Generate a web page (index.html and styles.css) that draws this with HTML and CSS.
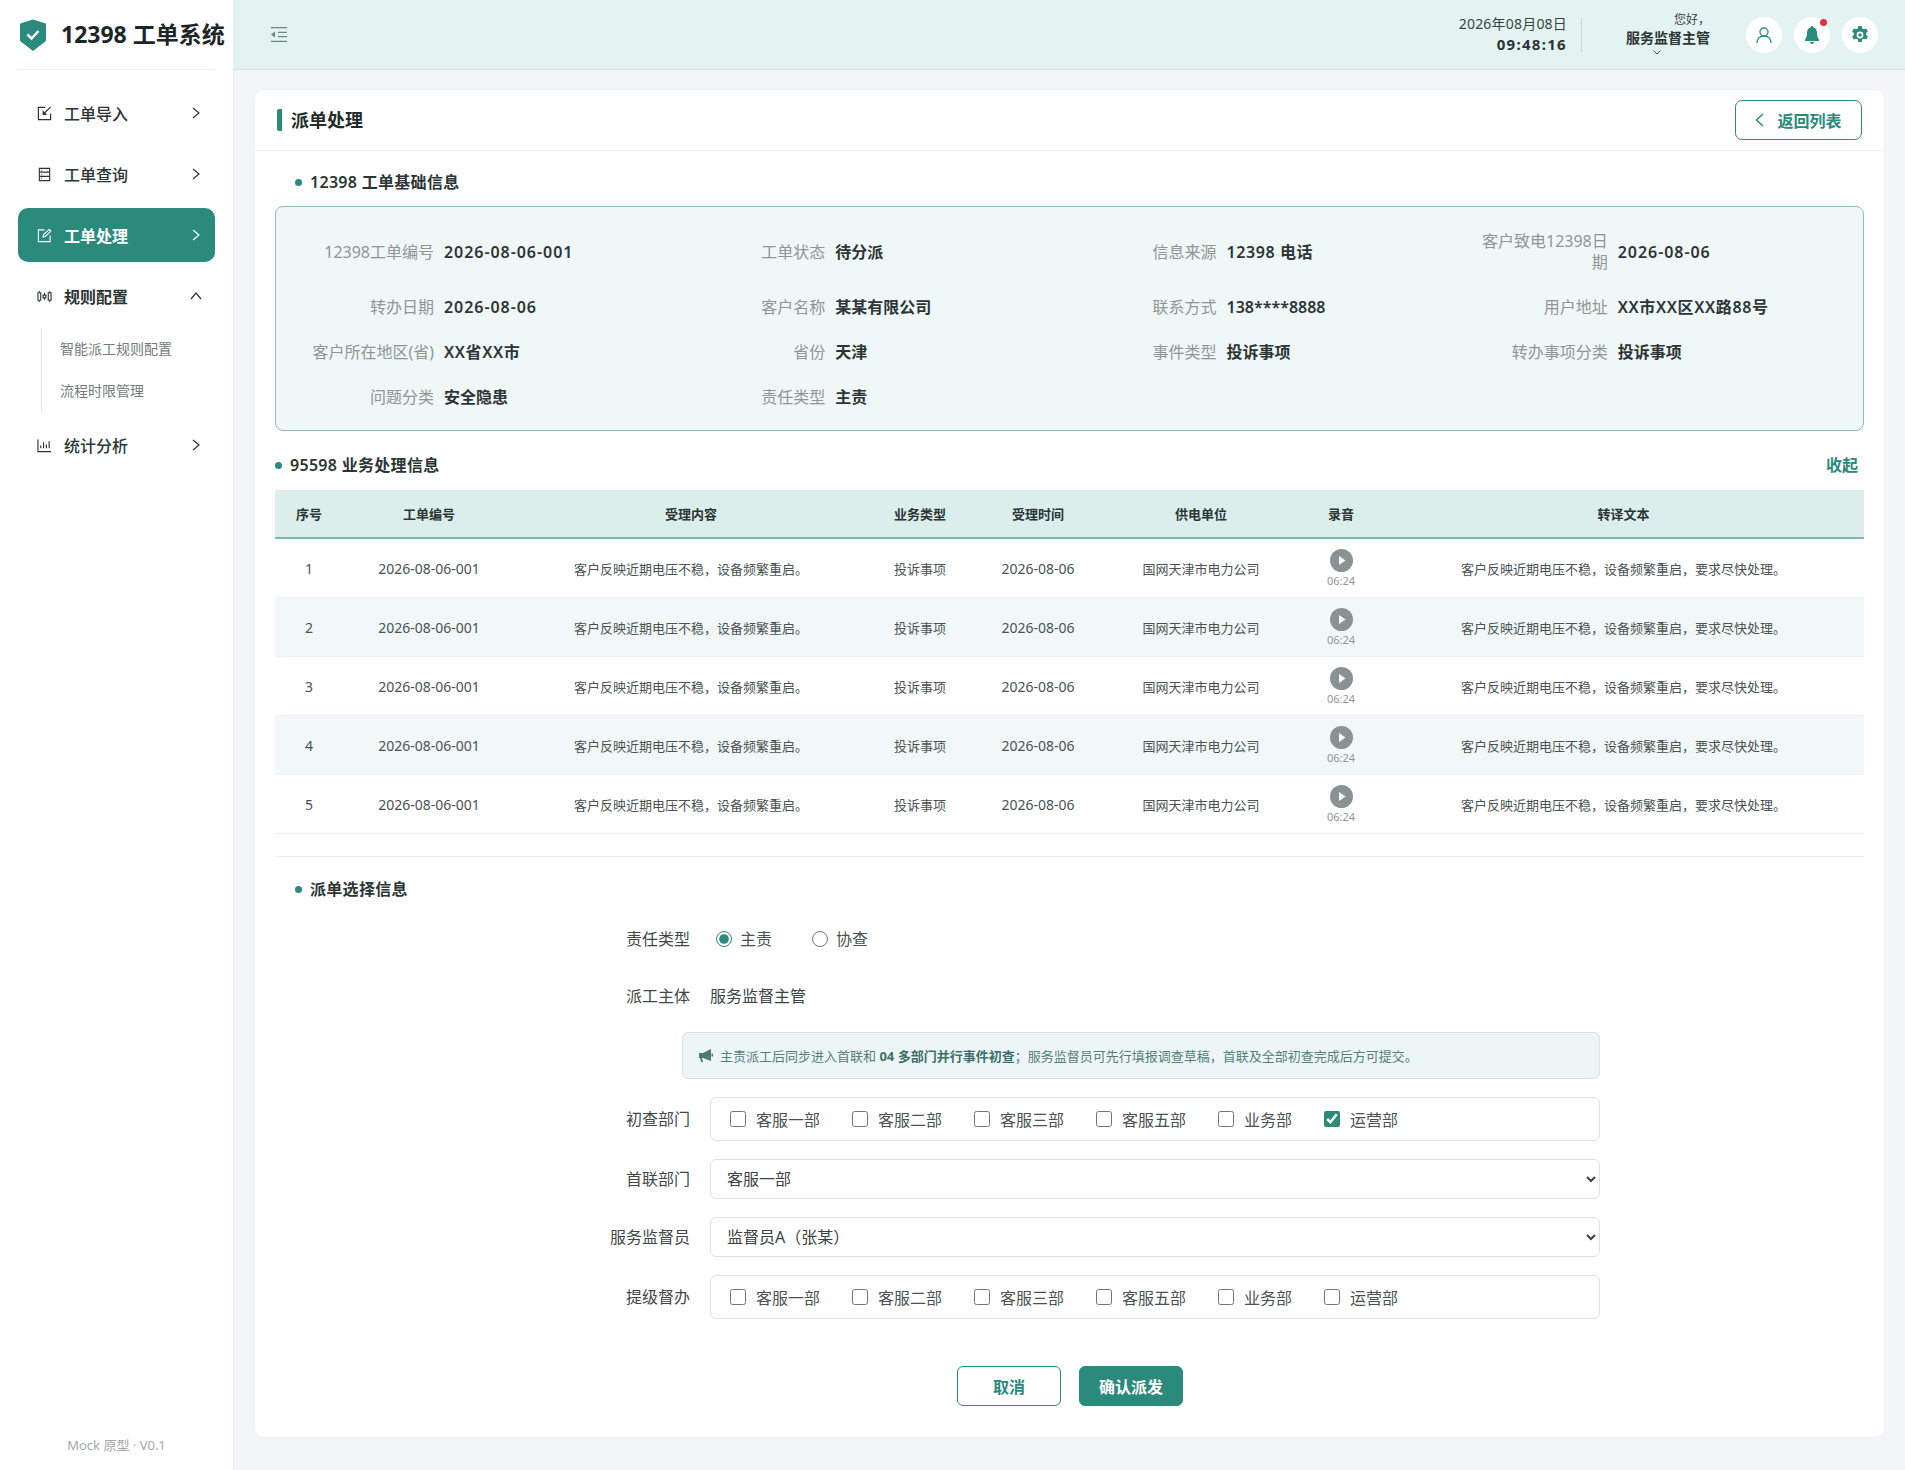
FILE: index.html
```html
<!DOCTYPE html>
<html lang="zh-CN">
<head>
    <meta charset="UTF-8">
    <title>12398 工单系统</title>
    <link rel="stylesheet" href="styles.css">
</head>
<body>
    <aside class="sidebar">
        <div class="logo">
            <svg class="logo-icon" viewBox="0 0 26 32"><path d="M13 .5 25 4.300c.6.200 1 .7 1 1.300V21c0 .6-.3 1.100-.7 1.500L13 32 .7 22.500C.3 22.100 0 21.600 0 21V5.600c0-.6.4-1.100 1-1.300z" fill="#2a8a7c"/><path d="M7.500 15.500l4 4 7-7.500" fill="none" stroke="#fff" stroke-width="2.500"/></svg>
            <span class="logo-text">12398 工单系统</span>
        </div>
        <nav class="nav">
            <a class="nav-item">
                <svg class="nav-icon" viewBox="0 0 16 16"><path d="M9 1.500H1.500v13h13V8" fill="none" stroke="currentColor" stroke-width="1.300"/><path d="M14.500 1 7.500 8" fill="none" stroke="currentColor" stroke-width="1.300"/><path d="M6 4.500v5h5z" fill="currentColor"/></svg>
                <span>工单导入</span>
                <svg class="nav-arrow" viewBox="0 0 8 12"><path d="M1 1l6 5-6 5" fill="none" stroke="currentColor" stroke-width="1.200"/></svg>
            </a>
            <a class="nav-item">
                <svg class="nav-icon" viewBox="0 0 16 16"><path d="M2.500 1.500h11v13h-11zM2.500 5.500h11M2.500 10h11M4.500 3.500h1M4.500 8h1M4.500 12h1" fill="none" stroke="currentColor" stroke-width="1.200"/></svg>
                <span>工单查询</span>
                <svg class="nav-arrow" viewBox="0 0 8 12"><path d="M1 1l6 5-6 5" fill="none" stroke="currentColor" stroke-width="1.200"/></svg>
            </a>
            <a class="nav-item active">
                <svg class="nav-icon" viewBox="0 0 16 16"><path d="M8 2H1.500v12.500H14V8M6.500 9.500l.5-2.500 6-5.500 1.800 1.800-6 5.700z" fill="none" stroke="currentColor" stroke-width="1.200"/></svg>
                <span>工单处理</span>
                <svg class="nav-arrow" viewBox="0 0 8 12"><path d="M1 1l6 5-6 5" fill="none" stroke="currentColor" stroke-width="1.200"/></svg>
            </a>
            <a class="nav-item open">
                <svg class="nav-icon" viewBox="0 0 16 16"><path d="M2.500 2v12M8 4v8M13.500 2v12" stroke="currentColor" stroke-width="1"/><path d="M1 4h3v8H1zM6.500 6.500h3v3h-3zM12 4h3v8h-3z" fill="#fff" stroke="currentColor" stroke-width="1.200"/></svg>
                <span>规则配置</span>
                <svg class="nav-arrow up" viewBox="0 0 12 8"><path d="M1 7l5-6 5 6" fill="none" stroke="currentColor" stroke-width="1.200"/></svg>
            </a>
            <div class="subnav">
                <a class="subnav-item">智能派工规则配置</a>
                <a class="subnav-item">流程时限管理</a>
            </div>
            <a class="nav-item">
                <svg class="nav-icon" viewBox="0 0 16 16"><path d="M1 1.500v13h14M4 11V8M7 11V4.500M10 11V7M13 11V3.500" fill="none" stroke="currentColor" stroke-width="1.200"/></svg>
                <span>统计分析</span>
                <svg class="nav-arrow" viewBox="0 0 8 12"><path d="M1 1l6 5-6 5" fill="none" stroke="currentColor" stroke-width="1.200"/></svg>
            </a>
        </nav>
        <div class="sidebar-footer">Mock 原型 · V0.1</div>
    </aside>

    <div class="main">
        <header class="topbar">
            <svg class="menu-toggle" viewBox="0 0 16 15"><path d="M0 .7h16M7 5.300h9M7 9.700h9M0 14.300h16" stroke="#6f8583" stroke-width="1.300"/><path d="M4 4.500v6L0 7.500z" fill="#6f8583"/></svg>
            <div class="datetime">
                <div class="date">2026年08月08日</div>
                <div class="time">09:48:16</div>
            </div>
            <div class="user">
                <div class="hello">您好，</div>
                <div class="user-name">服务监督主管</div>
                <svg class="user-arrow" viewBox="0 0 8 5"><path d="M.5.500 4 4 7.500.500" fill="none" stroke="#333" stroke-width=".9"/></svg>
            </div>
            <div class="top-icons">
                <span class="round-btn"><svg viewBox="0 0 16 16" width="16" height="16"><circle cx="8" cy="5" r="4" fill="none" stroke="#2a8a7c" stroke-width="1.300"/><path d="M1 16c0-4 2.500-7 7-7s7 3 7 7" fill="none" stroke="#2a8a7c" stroke-width="1.300"/></svg></span>
                <span class="round-btn"><svg viewBox="0 0 14 18" width="14" height="18"><path d="M7 0c.8 0 1.300.5 1.300 1.300C10.800 2 12 4 12 7c0 3 .7 5 2 6.500V15H0v-1.500C1.300 12 2 10 2 7c0-3 1.200-5 3.700-5.700C5.700.5 6.200 0 7 0zM5 16h4c0 1.200-.9 2-2 2s-2-.8-2-2z" fill="#2a8a7c"/></svg><i class="dot-red"></i></span>
                <span class="round-btn"><svg viewBox="0 0 18 18" width="18" height="18"><path d="M7.300 0h3.400l.5 2.400 1.700.9 2.300-.8 1.700 2.900-1.800 1.600v2l1.800 1.600-1.700 2.900-2.300-.8-1.700.9-.5 2.400H7.300l-.5-2.400-1.700-.9-2.300.8-1.700-2.900 1.800-1.600v-2L1.100 5.400l1.700-2.900 2.300.8 1.700-.9z" fill="#2a8a7c"/><circle cx="9" cy="9" r="3.400" fill="#fff"/><circle cx="9" cy="9" r="1.700" fill="#2a8a7c"/></svg></span>
            </div>
        </header>

        <div class="content">
            <section class="card">
                <div class="card-header">
                    <h2 class="card-title">派单处理</h2>
                    <button class="btn-back"><svg viewBox="0 0 9 14" width="9" height="14"><path d="M8 1 1.500 7 8 13" fill="none" stroke="#2a8a7c" stroke-width="1.500"/></svg>返回列表</button>
                </div>
                <div class="card-body">
                    <h3 class="section-title indent first">12398 工单基础信息</h3>
                    <div class="info-box">
                        <div class="info-item"><span class="info-label">12398工单编号</span><span class="info-value code">2026-08-06-001</span></div>
                        <div class="info-item"><span class="info-label">工单状态</span><span class="info-value">待分派</span></div>
                        <div class="info-item"><span class="info-label">信息来源</span><span class="info-value wide">12398 电话</span></div>
                        <div class="info-item"><span class="info-label">客户致电12398日期</span><span class="info-value code">2026-08-06</span></div>
                        <div class="info-item"><span class="info-label">转办日期</span><span class="info-value code">2026-08-06</span></div>
                        <div class="info-item"><span class="info-label">客户名称</span><span class="info-value">某某有限公司</span></div>
                        <div class="info-item"><span class="info-label">联系方式</span><span class="info-value">138****8888</span></div>
                        <div class="info-item"><span class="info-label">用户地址</span><span class="info-value wide">XX市XX区XX路88号</span></div>
                        <div class="info-item"><span class="info-label">客户所在地区(省)</span><span class="info-value wide">XX省XX市</span></div>
                        <div class="info-item"><span class="info-label">省份</span><span class="info-value">天津</span></div>
                        <div class="info-item"><span class="info-label">事件类型</span><span class="info-value">投诉事项</span></div>
                        <div class="info-item"><span class="info-label">转办事项分类</span><span class="info-value">投诉事项</span></div>
                        <div class="info-item"><span class="info-label">问题分类</span><span class="info-value">安全隐患</span></div>
                        <div class="info-item"><span class="info-label">责任类型</span><span class="info-value">主责</span></div>
                    </div>

                    <div class="section-row">
                        <h3 class="section-title">95598 业务处理信息</h3>
                        <a class="link-collapse">收起</a>
                    </div>
                    <table class="data-table">
                        <colgroup>
                            <col class="c-no"><col class="c-code"><col class="c-content"><col class="c-type"><col class="c-date"><col class="c-unit"><col class="c-audio"><col>
                        </colgroup>
                        <thead>
                            <tr><th>序号</th><th>工单编号</th><th>受理内容</th><th>业务类型</th><th>受理时间</th><th>供电单位</th><th>录音</th><th>转译文本</th></tr>
                        </thead>
                        <tbody>
                            <tr>
                                <td class="num">1</td><td class="num">2026-08-06-001</td><td>客户反映近期电压不稳，设备频繁重启。</td><td>投诉事项</td><td class="num">2026-08-06</td><td>国网天津市电力公司</td>
                                <td><svg class="play" viewBox="0 0 23 23"><circle cx="11.500" cy="11.500" r="11.500" fill="#8a9393"/><path d="M9 7l6.500 4.500L9 16z" fill="#fff"/></svg><div class="audio-time">06:24</div></td>
                                <td>客户反映近期电压不稳，设备频繁重启，要求尽快处理。</td>
                            </tr>
                            <tr>
                                <td class="num">2</td><td class="num">2026-08-06-001</td><td>客户反映近期电压不稳，设备频繁重启。</td><td>投诉事项</td><td class="num">2026-08-06</td><td>国网天津市电力公司</td>
                                <td><svg class="play" viewBox="0 0 23 23"><circle cx="11.500" cy="11.500" r="11.500" fill="#8a9393"/><path d="M9 7l6.500 4.500L9 16z" fill="#fff"/></svg><div class="audio-time">06:24</div></td>
                                <td>客户反映近期电压不稳，设备频繁重启，要求尽快处理。</td>
                            </tr>
                            <tr>
                                <td class="num">3</td><td class="num">2026-08-06-001</td><td>客户反映近期电压不稳，设备频繁重启。</td><td>投诉事项</td><td class="num">2026-08-06</td><td>国网天津市电力公司</td>
                                <td><svg class="play" viewBox="0 0 23 23"><circle cx="11.500" cy="11.500" r="11.500" fill="#8a9393"/><path d="M9 7l6.500 4.500L9 16z" fill="#fff"/></svg><div class="audio-time">06:24</div></td>
                                <td>客户反映近期电压不稳，设备频繁重启，要求尽快处理。</td>
                            </tr>
                            <tr>
                                <td class="num">4</td><td class="num">2026-08-06-001</td><td>客户反映近期电压不稳，设备频繁重启。</td><td>投诉事项</td><td class="num">2026-08-06</td><td>国网天津市电力公司</td>
                                <td><svg class="play" viewBox="0 0 23 23"><circle cx="11.500" cy="11.500" r="11.500" fill="#8a9393"/><path d="M9 7l6.500 4.500L9 16z" fill="#fff"/></svg><div class="audio-time">06:24</div></td>
                                <td>客户反映近期电压不稳，设备频繁重启，要求尽快处理。</td>
                            </tr>
                            <tr>
                                <td class="num">5</td><td class="num">2026-08-06-001</td><td>客户反映近期电压不稳，设备频繁重启。</td><td>投诉事项</td><td class="num">2026-08-06</td><td>国网天津市电力公司</td>
                                <td><svg class="play" viewBox="0 0 23 23"><circle cx="11.500" cy="11.500" r="11.500" fill="#8a9393"/><path d="M9 7l6.500 4.500L9 16z" fill="#fff"/></svg><div class="audio-time">06:24</div></td>
                                <td>客户反映近期电压不稳，设备频繁重启，要求尽快处理。</td>
                            </tr>
                        </tbody>
                    </table>

                    <div class="divider"></div>

                    <h3 class="section-title indent">派单选择信息</h3>
                    <form class="dispatch-form">
                        <div class="form-row row-radio">
                            <label class="form-label">责任类型</label>
                            <div class="radio-group">
                                <label class="radio"><input type="radio" name="duty" checked>主责</label>
                                <label class="radio"><input type="radio" name="duty">协查</label>
                            </div>
                        </div>
                        <div class="form-row row-text">
                            <label class="form-label">派工主体</label>
                            <div class="form-text">服务监督主管</div>
                        </div>
                        <div class="notice">
                            <svg class="notice-icon" viewBox="0 0 14 13"><path d="M0 4h4l8-4v12L4 9H3l1 4H2L1 9H0z" fill="#4f7a73"/><rect x="12.500" y="4.500" width="1.500" height="3" fill="#4f7a73"/></svg>
                            <span>主责派工后同步进入首联和 <b>04 多部门并行事件初查</b>；服务监督员可先行填报调查草稿，首联及全部初查完成后方可提交。</span>
                        </div>
                        <div class="form-row">
                            <label class="form-label">初查部门</label>
                            <div class="check-box">
                                <label class="check"><input type="checkbox">客服一部</label>
                                <label class="check"><input type="checkbox">客服二部</label>
                                <label class="check"><input type="checkbox">客服三部</label>
                                <label class="check"><input type="checkbox">客服五部</label>
                                <label class="check"><input type="checkbox">业务部</label>
                                <label class="check"><input type="checkbox" checked>运营部</label>
                            </div>
                        </div>
                        <div class="form-row">
                            <label class="form-label">首联部门</label>
                            <select class="form-select"><option>客服一部</option></select>
                        </div>
                        <div class="form-row">
                            <label class="form-label">服务监督员</label>
                            <select class="form-select"><option>监督员A（张某）</option></select>
                        </div>
                        <div class="form-row">
                            <label class="form-label">提级督办</label>
                            <div class="check-box">
                                <label class="check"><input type="checkbox">客服一部</label>
                                <label class="check"><input type="checkbox">客服二部</label>
                                <label class="check"><input type="checkbox">客服三部</label>
                                <label class="check"><input type="checkbox">客服五部</label>
                                <label class="check"><input type="checkbox">业务部</label>
                                <label class="check"><input type="checkbox">运营部</label>
                            </div>
                        </div>
                    </form>
                    <div class="form-actions">
                        <button class="btn btn-cancel">取消</button>
                        <button class="btn btn-primary">确认派发</button>
                    </div>
                </div>
            </section>
        </div>
    </div>
</body>
</html>
```

FILE: styles.css
```css
* {
    box-sizing: border-box;
    font-family: "Noto Sans", "Noto Sans CJK SC", sans-serif;
}

body {
    margin: 0;
    display: flex;
    min-height: 100vh;
    background: #f3f6f8;
    color: #2c3535;
}

/* 侧边栏 */
.sidebar {
    width: 234px;
    flex-shrink: 0;
    display: flex;
    flex-direction: column;
    background: #fff;
    border-right: 1px solid #e6ecec;
}

.logo {
    height: 70px;
    margin: 0 18px;
    padding-left: 2px;
    display: flex;
    align-items: center;
    gap: 15px;
    border-bottom: 1px solid #eef2f2;
}

.logo-icon {
    width: 26px;
    height: 32px;
    flex-shrink: 0;
}

.logo-text {
    margin-bottom: 3px;
    font-size: 23px;
    font-weight: 700;
    white-space: nowrap;
    color: #1d2626;
}

.nav {
    margin: 16px 18px 0;
}

.nav-item {
    height: 54px;
    margin-bottom: 7px;
    padding: 0 15px 0 19px;
    display: flex;
    align-items: center;
    gap: 12px;
    border-radius: 10px;
    font-size: 16px;
    font-weight: 500;
    color: #2c3535;
}

.nav-item.open {
    margin-bottom: 5px;
    font-weight: 700;
}

.nav-item.active {
    background: #2a8a7c;
    color: #fff;
    font-weight: 700;
}

.nav-icon {
    width: 15px;
    height: 15px;
    flex-shrink: 0;
}

.nav-arrow {
    width: 8px;
    height: 12px;
    margin-left: auto;
}

.nav-arrow.up {
    width: 12px;
    height: 8px;
    margin-right: -2px;
}

.subnav {
    margin: 0 0 6px 23px;
    border-left: 1px solid #e3e8e8;
}

.subnav-item {
    display: block;
    height: 42px;
    line-height: 42px;
    padding-left: 18px;
    font-size: 14px;
    color: #757c7c;
}

.sidebar-footer {
    margin-top: auto;
    padding-bottom: 17px;
    text-align: center;
    font-size: 13px;
    color: #a3a9a9;
}

/* 顶栏 */
.main {
    flex: 1;
    min-width: 0;
    display: flex;
    flex-direction: column;
}

.topbar {
    height: 70px;
    padding: 0 27px 0 37px;
    display: flex;
    align-items: center;
    background: #e3f3f1;
    border-bottom: 1px solid #d9e5e5;
}

.menu-toggle {
    width: 16px;
    height: 15px;
}

.datetime {
    margin-left: auto;
    padding-right: 14px;
    text-align: right;
}

.date {
    font-size: 14px;
    line-height: 20px;
    letter-spacing: .2px;
    color: #3a4343;
}

.time {
    font-size: 15px;
    line-height: 21px;
    font-weight: 700;
    letter-spacing: 1.3px;
    color: #2c3535;
}

.user {
    margin-right: 36px;
    padding-left: 44px;
    height: 34px;
    border-left: 1px solid #c9d8d8;
    position: relative;
    text-align: right;
}

.hello {
    margin-top: -7px;
    font-size: 12px;
    line-height: 17px;
    color: #3a4343;
}

.user-name {
    font-size: 14px;
    line-height: 20px;
    font-weight: 700;
    color: #2c3535;
}

.user-arrow {
    position: absolute;
    left: 71px;
    top: 32px;
    width: 8px;
    height: 5px;
}

.top-icons {
    display: flex;
    gap: 12px;
}

.round-btn {
    position: relative;
    width: 36px;
    height: 36px;
    display: flex;
    align-items: center;
    justify-content: center;
    border-radius: 50%;
    background: #fff;
}

.dot-red {
    position: absolute;
    top: 2px;
    right: 3px;
    width: 7px;
    height: 7px;
    border-radius: 50%;
    background: #e0323c;
}

/* 内容卡片 */
.content {
    padding: 19px 20px 33px 20px;
}

.card {
    background: #fff;
    border-radius: 10px;
    border: 1px solid #eef2f2;
}

.card-header {
    height: 61px;
    padding: 0 22px;
    display: flex;
    align-items: center;
    justify-content: space-between;
    border-bottom: 1px solid #edf1f1;
}

.card-title {
    margin: 0;
    padding-left: 9px;
    border-left: 5px solid #2a8a7c;
    border-radius: 2px;
    font-size: 18px;
    line-height: 22px;
    font-weight: 700;
    color: #1f2a2a;
}

.btn-back {
    width: 127px;
    height: 40px;
    display: flex;
    align-items: center;
    justify-content: center;
    gap: 13px;
    background: #fff;
    border: 1px solid #2a8a7c;
    border-radius: 7px;
    font-size: 16px;
    font-weight: 600;
    color: #2a8a7c;
}

.card-body {
    padding: 0 20px 31px;
}

.section-title {
    position: relative;
    margin: 0;
    padding-left: 15px;
    font-size: 16px;
    line-height: 24px;
    font-weight: 600;
    letter-spacing: .3px;
    color: #2c3535;
}

.section-title::before {
    content: '';
    position: absolute;
    left: 0;
    top: 9px;
    width: 7px;
    height: 7px;
    border-radius: 50%;
    background: #2a8a7c;
}

.section-title.indent {
    margin-left: 20px;
    margin-top: 20px;
}

.section-title.first {
    margin-top: 19px;
}

.info-box {
    margin-top: 12px;
    padding: 24px 18px 22px 28px;
    display: grid;
    grid-template-columns: repeat(4, 1fr);
    gap: 24px 24px;
    background: #eff7f7;
    border: 1px solid #8fbfb9;
    border-radius: 8px;
}

.info-item {
    display: flex;
    align-items: center;
    gap: 10px;
    font-size: 16px;
    line-height: 21px;
}

.info-label {
    width: 130px;
    flex-shrink: 0;
    text-align: right;
    color: #8f9696;
}

.info-value {
    font-weight: 600;
    color: #2c3535;
}

.info-value.code {
    letter-spacing: .95px;
}

.info-value.wide {
    letter-spacing: .6px;
}

.section-row {
    margin-top: 22px;
    padding-right: 6px;
    display: flex;
    align-items: center;
    justify-content: space-between;
}

.link-collapse {
    font-size: 16px;
    font-weight: 600;
    line-height: 24px;
    color: #2a8a7c;
}

/* 表格 */
.data-table {
    width: 100%;
    margin-top: 13px;
    table-layout: fixed;
    border-collapse: collapse;
    text-align: center;
    font-size: 13px;
}

.c-no { width: 68px; }
.c-code { width: 172px; }
.c-content { width: 352px; }
.c-type { width: 106px; }
.c-date { width: 130px; }
.c-unit { width: 196px; }
.c-audio { width: 84px; }

.data-table th {
    height: 48px;
    background: #dceeeb;
    border-bottom: 2px solid #7fb8ae;
    font-weight: 600;
    color: #2c3535;
}

.data-table td {
    height: 59px;
    padding: 2px 0 0;
    border-bottom: 1px solid #edf2f2;
    color: #4a5252;
}

.data-table td.num {
    font-size: 14px;
}

.data-table tbody tr:nth-child(even) {
    background: #f2f8f8;
}

.play {
    display: block;
    width: 23px;
    height: 23px;
    margin: -1px auto 0;
}

.audio-time {
    margin-top: 2px;
    font-size: 11px;
    line-height: 14px;
    color: #8f9696;
}

.divider {
    margin-top: 22px;
    height: 1px;
    background: #edf1f1;
}

/* 派单表单 */
.dispatch-form {
    margin: 26px 0 0 275px;
    width: 1050px;
}

.form-row {
    display: grid;
    grid-template-columns: 140px 890px;
    column-gap: 20px;
    align-items: center;
    margin-bottom: 18px;
}

.row-radio {
    margin-bottom: 33px;
}

.row-text {
    margin-bottom: 24px;
}

.form-label {
    text-align: right;
    font-size: 16px;
    line-height: 24px;
    color: #3f4747;
}

.form-text {
    font-size: 16px;
    line-height: 24px;
    color: #3a4343;
}

.radio-group {
    display: flex;
    gap: 40px;
    padding-left: 6px;
}

.radio {
    display: flex;
    align-items: center;
    gap: 8px;
    font-size: 16px;
    line-height: 24px;
    color: #4a5252;
}

.radio input {
    width: 16px;
    height: 16px;
    margin: 0;
    accent-color: #2a8a7c;
}

.notice {
    height: 47px;
    margin: 0 0 18px 132px;
    padding-left: 16px;
    display: flex;
    align-items: center;
    gap: 7px;
    background: #edf6f6;
    border: 1px solid #d5e6e4;
    border-radius: 6px;
    font-size: 13px;
    color: #55807a;
}

.notice b {
    font-weight: 700;
    color: #3f6f68;
}

.notice-icon {
    width: 14px;
    height: 13px;
    flex-shrink: 0;
}

.check-box {
    height: 44px;
    padding-left: 19px;
    display: flex;
    align-items: center;
    gap: 32px;
    border: 1px solid #dfe3e3;
    border-radius: 6px;
}

.check {
    display: flex;
    align-items: center;
    gap: 10px;
    font-size: 16px;
    color: #4a5252;
}

.check input {
    width: 16px;
    height: 16px;
    margin: 0;
    accent-color: #2a8a7c;
}

.form-select {
    width: 100%;
    height: 40px;
    padding: 0 12px;
    background: #fff;
    border: 1px solid #dfe3e3;
    border-radius: 6px;
    font-size: 16px;
    color: #3a4343;
}

.form-actions {
    margin-top: 47px;
    padding-left: 682px;
    display: flex;
    gap: 18px;
}

.btn {
    width: 104px;
    height: 40px;
    border-radius: 6px;
    font-size: 16px;
    font-weight: 700;
}

.btn-cancel {
    background: #fff;
    border: 1px solid #2a8a7c;
    color: #2a8a7c;
}

.btn-primary {
    background: #2a8a7c;
    border: 1px solid #2a8a7c;
    color: #fff;
}
```
